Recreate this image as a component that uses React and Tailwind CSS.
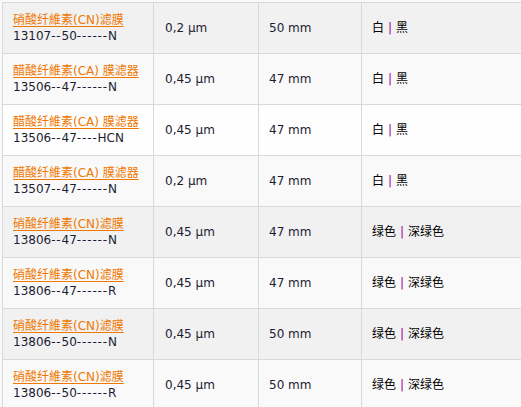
const rows = [
  { name: '硝酸纤維素(CN)滤膜', code: '13107--50------N', pore: '0,2 µm', size: '50 mm', colors: ['白', '黑'], bg: 'bg-[#f1f1f1]' },
  { name: '醋酸纤維素(CA) 膜滤器', code: '13506--47------N', pore: '0,45 µm', size: '47 mm', colors: ['白', '黑'], bg: 'bg-[#f9f9f9]' },
  { name: '醋酸纤維素(CA) 膜滤器', code: '13506--47----HCN', pore: '0,45 µm', size: '47 mm', colors: ['白', '黑'], bg: 'bg-[#fefefe]' },
  { name: '醋酸纤維素(CA) 膜滤器', code: '13507--47------N', pore: '0,2 µm', size: '47 mm', colors: ['白', '黑'], bg: 'bg-[#f9f9f9]' },
  { name: '硝酸纤維素(CN)滤膜', code: '13806--47------N', pore: '0,45 µm', size: '47 mm', colors: ['绿色', '深绿色'], bg: 'bg-[#f1f1f1]' },
  { name: '硝酸纤維素(CN)滤膜', code: '13806--47------R', pore: '0,45 µm', size: '47 mm', colors: ['绿色', '深绿色'], bg: 'bg-[#f9f9f9]' },
  { name: '硝酸纤維素(CN)滤膜', code: '13806--50------N', pore: '0,45 µm', size: '50 mm', colors: ['绿色', '深绿色'], bg: 'bg-[#f1f1f1]' },
  { name: '硝酸纤維素(CN)滤膜', code: '13806--50------R', pore: '0,45 µm', size: '50 mm', colors: ['绿色', '深绿色'], bg: 'bg-[#f9f9f9]' },
];

// hyphens in the original font are a bit wider, so give them a little tracking
function Code({ text }) {
  return text.split(/(-+)/).map((part, i) =>
    part.startsWith('-') ? (
      <span key={i} className="tracking-[0.85px]">{part}</span>
    ) : (
      <span key={i}>{part}</span>
    )
  );
}

function App() {
  return (
    <div className="min-h-screen bg-[#f9f9f9] pl-[2px] pt-[2px] overflow-hidden">
      <table
        className="table-fixed border-collapse w-[519px] text-[12px] leading-[16px] text-[#1c1c33]"
        style={{ fontFamily: '"DejaVu Sans", Verdana, "Noto Sans CJK SC", sans-serif' }}
      >
        <colgroup>
          <col className="w-[151px]" />
          <col className="w-[105px]" />
          <col className="w-[103px]" />
          <col className="w-[160px]" />
        </colgroup>
        <tbody>
          {rows.map((r, i) => (
            <tr key={i} className={`${r.bg} h-[51px]`}>
              <td className="border border-[#d9d9d9] px-[10px] py-0 align-middle">
                <a href="#" className="text-[#f07800] underline underline-offset-2 whitespace-nowrap">{r.name}</a>
                <div className="whitespace-nowrap"><Code text={r.code} /></div>
              </td>
              <td className="border border-[#d9d9d9] px-[11px] align-middle">{r.pore}</td>
              <td className="border border-[#d9d9d9] px-[10px] align-middle">{r.size}</td>
              <td className="border border-[#d9d9d9] px-[10px] align-middle text-black">
                <span className="flex items-center gap-[4px]">
                  {r.colors[0]}
                  <span className="text-[#990099]">|</span>
                  {r.colors[1]}
                </span>
              </td>
            </tr>
          ))}
        </tbody>
      </table>
    </div>
  );
}

export default App;
